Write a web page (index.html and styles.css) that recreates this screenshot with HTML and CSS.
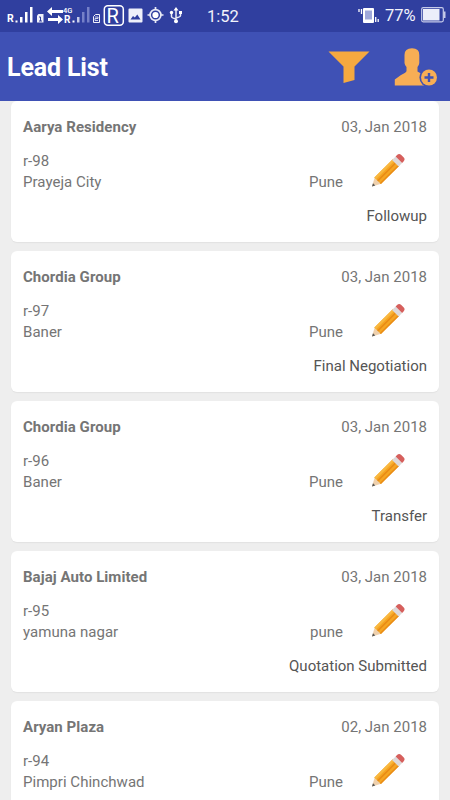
FILE: index.html
```html
<!DOCTYPE html>
<html lang="en">
<head>
<meta charset="utf-8">
<title>Lead List</title>
<link rel="stylesheet" href="styles.css">
</head>
<body>
<header class="status">
  <svg class="status-icons" width="190" height="32" viewBox="0 0 190 32">
    <g class="status-text">
      <text x="7" y="22" font-size="10.5" font-weight="700">R</text>
      <text x="64" y="22.500" font-size="10" font-weight="700">R</text>
      <text x="63" y="12.500" font-size="7.500" font-weight="500">4G</text>
    </g>
    <g fill="#fff">
      <path d="M15.500 20.500h2v2h-2zM20 17h2.500v5.500H20zM25 12h2.500v10.500H25zM30 7h2.500v15.500H30zM72.500 20.500h2v2h-2z"/>
      <path d="M47 11.500l5-4.500v3h11v3H52v3zM63 19.500l-5-4.500v3H48v3h10v3z"/>
    </g>
    <path fill="#c5cae9" d="M77 17h2.500v5.500H77z"/>
    <path fill="#7580c8" d="M82 12h2.500v10.500H82zM87 7h2.500v15.500H87z"/>
    <path fill="#f0f1fa" d="M38.500 14h5v8.500H37v-7z"/>
    <path fill="none" stroke="#f0f1fa" d="M95.500 14.500h4v8h-6v-6z"/>
    <path fill="none" stroke="#303f9f" d="M39 17h1.500v4M39 21h3"/>
    <path fill="none" stroke="#f0f1fa" stroke-width=".8" d="M95 17h3v1.500h-3v2h3"/>
    <rect x="104.300" y="5.800" width="19" height="19.500" rx="3.500" fill="none" stroke="#fff" stroke-width="1.500"/>
    <text class="status-text" x="106.500" y="22.500" font-size="20">R</text>
    <path fill="#eef0fa" fill-rule="evenodd" d="M129.500 8.500h12q1 0 1 1v12q0 1-1 1h-12q-1 0-1-1v-12q0-1 1-1zM130.500 19.500h10l-3.200-5-2.500 3-1.800-1.500z"/>
    <g fill="none" stroke="#e8eaf6" stroke-width="1.700">
      <circle cx="155.500" cy="15" r="5.400"/>
      <path d="M155.500 7v3M155.500 20v3M147.500 15h3M160.500 15h3"/>
    </g>
    <circle cx="155.500" cy="15" r="3.100" fill="#fff"/>
    <g fill="none" stroke="#e8eaf6" stroke-width="1.500">
      <path d="M176 9v12M171.500 13v3.500q0 1.500 4.500 2.500M180.500 13v2.500q0 1.500-4.500 2.500"/>
    </g>
    <path fill="#fff" d="M173.500 10.500L176 7l2.500 3.500zM179 11h3v3h-3z"/>
    <circle cx="171.500" cy="12.500" r="1.700" fill="#fff"/>
    <circle cx="176" cy="21.300" r="2" fill="#fff"/>
  </svg>
  <span class="clock">1:52</span>
  <svg class="vibrate" width="22" height="18" viewBox="0 0 22 18">
    <path fill="#fff" d="M6 1h9q1 0 1 1v13q0 1-1 1H6q-1 0-1-1V2q0-1 1-1z"/>
    <path fill="#9fa8da" d="M7 3.500h7v9H7z"/>
    <path fill="none" stroke="#fff" stroke-width="1.300" d="M1 2v3M3.500 2v5M17.700 10v5M20.200 12v3"/>
  </svg>
  <span class="percent">77%</span>
  <svg class="battery" width="25" height="16" viewBox="0 0 25 16">
    <rect x=".7" y=".7" width="21.600" height="14.100" rx="1.500" fill="none" stroke="#c5cae9" stroke-width="1.200"/>
    <path fill="#eceefa" d="M2 2h16.500v11.500H2z"/>
    <path fill="#c5cae9" d="M22.500 4.500h2v6.500h-2z"/>
  </svg>
</header>
<div class="toolbar">
  <h1>Lead List</h1>
  <svg class="filter" width="42" height="33" viewBox="0 0 42 33">
    <path fill="#f5a93f" d="M.5.500h41L26.500 15.500V29l-11 3V15.500z"/>
  </svg>
  <svg class="add-lead" width="43" height="38" viewBox="0 0 43 38">
    <path fill="#f7ae55" d="M10.500 7Q10.500.3 18 .3T25.300 7v8q-.3 2.500-1.800 4v4.500l7 4V37.500H.8V31.500L7 27q5.500-2.500 5.500-4v-4q-1.700-1.500-2-4z"/>
    <circle cx="35" cy="29.500" r="9.600" fill="#3f51b5"/>
    <circle cx="35" cy="29.500" r="8" fill="#f7ae55"/>
    <path fill="none" stroke="#3f51b5" stroke-width="2.400" d="M35 25v9M30.500 29.500h9"/>
  </svg>
</div>
<svg class="defs" width="0" height="0">
  <symbol id="pencil" viewBox="0 0 34 34">
    <g transform="translate(1 33.500) rotate(-45)">
      <path fill="#eed0ad" d="M0 0L8.500-4.600V4.600z"/>
      <path fill="#555" d="M0 0l3-1.600v3.200z"/>
      <path fill="#f5a623" d="M8-4.600h26v9.200H8z"/>
      <path fill="#f9b840" d="M8-4.600h26v2.300H8z"/>
      <path fill="#e98b16" d="M8-.7h26v1.500H8zM8 3.200h26v1.400H8z"/>
      <path fill="#ddd9da" d="M33-4.600h5v9.200h-5z"/>
      <path fill="#d65f5c" d="M38-4.600h2q3 0 3 3v3.200q0 3-3 3h-2z"/>
    </g>
  </symbol>
</svg>
<main class="list">
  <article class="card">
    <div class="head"><h2>Aarya Residency</h2><span>03, Jan 2018</span></div>
    <div class="body"><div class="lead"><p>r-98</p><p>Prayeja City</p></div><span class="city">Pune</span><svg class="edit"><use href="#pencil"/></svg></div>
    <p class="state">Followup</p>
  </article>
  <article class="card">
    <div class="head"><h2>Chordia Group</h2><span>03, Jan 2018</span></div>
    <div class="body"><div class="lead"><p>r-97</p><p>Baner</p></div><span class="city">Pune</span><svg class="edit"><use href="#pencil"/></svg></div>
    <p class="state">Final Negotiation</p>
  </article>
  <article class="card">
    <div class="head"><h2>Chordia Group</h2><span>03, Jan 2018</span></div>
    <div class="body"><div class="lead"><p>r-96</p><p>Baner</p></div><span class="city">Pune</span><svg class="edit"><use href="#pencil"/></svg></div>
    <p class="state">Transfer</p>
  </article>
  <article class="card">
    <div class="head"><h2>Bajaj Auto Limited</h2><span>03, Jan 2018</span></div>
    <div class="body"><div class="lead"><p>r-95</p><p>yamuna nagar</p></div><span class="city">pune</span><svg class="edit"><use href="#pencil"/></svg></div>
    <p class="state">Quotation Submitted</p>
  </article>
  <article class="card">
    <div class="head"><h2>Aryan Plaza</h2><span>02, Jan 2018</span></div>
    <div class="body"><div class="lead"><p>r-94</p><p>Pimpri Chinchwad</p></div><span class="city">Pune</span><svg class="edit"><use href="#pencil"/></svg></div>
  </article>
</main>
</body>
</html>
```

FILE: styles.css
```css
* { box-sizing: border-box; }
body {
  margin: 0;
  height: 800px;
  overflow: hidden;
  display: flex;
  flex-direction: column;
  background: #eeeeee;
  font-family: Roboto, "Liberation Sans", sans-serif;
  color: #757575;
}
h1, h2, p { margin: 0; }
.defs { display: none; }
.status {
  flex: none;
  display: flex;
  height: 32px;
  background: #303f9f;
  color: #f2f3fb;
}
.status svg { flex: none; }
.status-text { fill: #fff; font-family: Roboto, sans-serif; }
.clock { margin-left: 17px; width: 151px; font-size: 16.5px; line-height: 33px; }
.vibrate { margin-top: 7px; }
.percent { margin-left: 5px; width: 36px; font-size: 16.5px; line-height: 31px; }
.battery { margin-top: 7px; }
.toolbar {
  flex: none;
  display: flex;
  height: 69px;
  padding-left: 7px;
  background: #3f51b5;
}
.toolbar h1 {
  width: 321px;
  color: #fff;
  font-size: 25px;
  font-weight: 700;
  line-height: 71px;
  letter-spacing: -0.15px;
}
.filter { margin-top: 19px; }
.add-lead { margin: 16px 0 0 24px; }
.list {
  flex: 1;
  min-height: 0;
  overflow: hidden;
  display: flex;
  flex-direction: column;
  gap: 9px;
  padding: 0 11px;
}
.card {
  flex: none;
  height: 141px;
  padding: 15px 12px 0;
  border-radius: 6px;
  background: #fff;
  box-shadow: 0 1px 1px #e2e2e2;
  font-size: 15px;
}
.card:first-child { padding-top: 16px; }
.card:not(:first-child) { margin-top: 0; }
.card + .card { padding-top: 16px; }
.head { display: flex; justify-content: space-between; line-height: 20px; }
.head h2 { font-size: 15px; font-weight: 700; letter-spacing: 0.05px; }
.body { display: flex; height: 56px; }
.lead { flex: 1; padding-top: 14px; line-height: 21px; letter-spacing: 0.03px; }
.city { padding-top: 35px; line-height: 21px; }
.edit { width: 34px; height: 34px; margin: 16px 22px 0 28px; }
.state { margin-top: 13px; text-align: right; line-height: 20px; color: #555; }
```
